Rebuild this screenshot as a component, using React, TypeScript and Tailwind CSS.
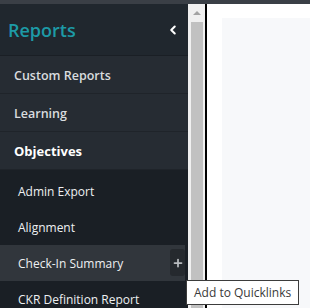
import { ChevronLeft, Plus } from "lucide-react";

const mainItems = [
  { label: "Custom Reports", active: false },
  { label: "Learning", active: false },
  { label: "Objectives", active: true },
];

const subItems = ["Admin Export", "Alignment", "Check-In Summary", "CKR Definition Report"];

export default function App() {
  return (
    <div className="relative w-[310px] h-[308px] overflow-hidden bg-white flex flex-col" style={{ fontFamily: '"Open Sans", "Noto Sans", sans-serif' }}>
      <div className="h-[4px] bg-[#3a3f46] shrink-0" />
      <div className="flex flex-1 min-h-0">
        {/* Sidebar */}
        <div className="w-[188px] bg-[#262c33] flex flex-col shrink-0 overflow-hidden">
          <div className="h-[52px] shrink-0 bg-[#20272e] border-b border-[#1a1f25] flex items-center justify-between pl-[8px] pr-[8px]">
            <span className="text-[18px] text-[#1d9aa6] font-semibold pt-[2px]">Reports</span>
            <ChevronLeft size={14} strokeWidth={3.5} className="text-white" />
          </div>
          {mainItems.map((item) => (
            <div
              key={item.label}
              className="h-[38px] shrink-0 border-b border-[#1f242a] flex items-center pl-[14px] pt-[3px]"
            >
              <span className={item.active ? "text-[13px] font-bold text-white" : "text-[12.5px] font-semibold text-[#d9dcdf]"}>
                {item.label}
              </span>
            </div>
          ))}
          <div className="flex-1 bg-[#1a1f25] flex flex-col pt-[3px]">
            {subItems.map((s) => {
              const hover = s === "Check-In Summary";
              return (
                <div
                  key={s}
                  className={
                    "relative h-[36px] shrink-0 flex items-center pl-[18px] pt-[2px] w-[185px] " +
                    (hover ? "bg-[#31363c]" : "")
                  }
                >
                  <span className="text-[12px] text-[#eef0f2]">{s}</span>
                  {hover && (
                    <div className="absolute right-0 top-[4px] w-[15px] h-[27px] rounded-[3px] bg-[#25292e] flex items-center justify-center">
                      <Plus size={12} strokeWidth={3.5} className="text-[#b9bcc0]" />
                    </div>
                  )}
                </div>
              );
            })}
          </div>
        </div>
        {/* Scrollbar */}
        <div className="w-[17px] bg-[#f0f0f0] flex flex-col items-center shrink-0">
          <div className="h-[18px] flex items-center justify-center">
            <div className="w-0 h-0 border-l-[4px] border-r-[4px] border-b-[4px] border-l-transparent border-r-transparent border-b-[#a3a3a3]" />
          </div>
          <div className="w-[12px] flex-1 bg-[#c1c1c1]" />
        </div>
        <div className="w-[2px] bg-black shrink-0" />
        {/* Content */}
        <div className="flex-1 bg-white pl-[15px] pt-[14px]">
          <div className="h-full bg-[#f7f8fa]" />
        </div>
      </div>
      {/* Tooltip */}
      <div className="absolute left-[186px] top-[280px] h-[25px] px-[7px] bg-white border border-[#3c3c3c] flex items-center">
        <span className="text-[12px] text-[#3a3a3a]">Add to Quicklinks</span>
      </div>
    </div>
  );
}
